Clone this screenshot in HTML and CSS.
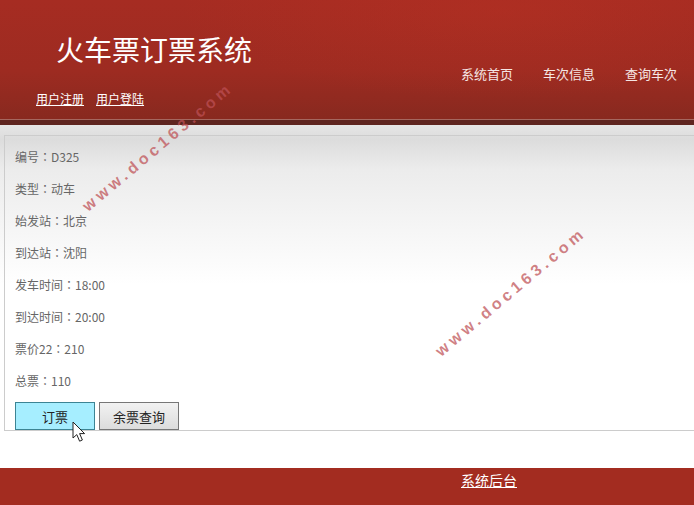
FILE: index.html
```html
<!DOCTYPE html>
<html lang="zh-CN">
<head>
<meta charset="UTF-8">
<meta name="viewport" content="width=device-width, initial-scale=1.0">
<title>火车票订票系统</title>
<link rel="stylesheet" href="styles.css">
</head>
<body>

<!-- 头部 -->
<header class="header">
<div class="brand">
<h1>火车票订票系统</h1>
<div class="user-links">
<a href="#">用户注册</a>
<a href="#">用户登陆</a>
</div>
</div>
<ul class="nav">
<li><a href="#">系统首页</a></li>
<li><a href="#">车次信息</a></li>
<li><a href="#">查询车次</a></li>
</ul>
</header>

<!-- 车次详情 -->
<div class="main">
<div class="detail">
<p>编号<span class="sep" lang="zh-TW">：</span>D325</p>
<p>类型<span class="sep" lang="zh-TW">：</span>动车</p>
<p>始发站<span class="sep" lang="zh-TW">：</span>北京</p>
<p>到达站<span class="sep" lang="zh-TW">：</span>沈阳</p>
<p>发车时间<span class="sep" lang="zh-TW">：</span>18:00</p>
<p>到达时间<span class="sep" lang="zh-TW">：</span>20:00</p>
<p>票价22<span class="sep" lang="zh-TW">：</span>210</p>
<p>总票<span class="sep" lang="zh-TW">：</span>110</p>
<div class="actions">
<button class="btn btn-hover">订票</button>
<button class="btn">余票查询</button>
</div>
</div>
</div>

<footer class="footer">
<a href="#">系统后台</a>
</footer>

<!-- 鼠标 -->
<svg class="cursor" width="14" height="22" viewBox="0 0 14 22">
<path d="M1 1V17L4.8 13.6L7.6 20.2L10.4 19L7.6 12.6H12.6Z" fill="#fff" stroke="#222" stroke-width="1"/>
</svg>

<!-- 水印 -->
<div class="watermark wm-1">www.doc163.com</div>
<div class="watermark wm-2">www.doc163.com</div>

</body>
</html>
```

FILE: styles.css
```css
html,body{
margin:0;
height:505px;
overflow:hidden;
}

body{
position:relative;
font-family:"Noto Sans CJK SC","Noto Sans",sans-serif;
background:#fff;
color:#666;
font-size:12px;
}

a{
color:#fff;
}

/* 头部 */
.header{
height:119px;
display:flex;
justify-content:space-between;
background:
radial-gradient(ellipse 320px 90px at 500px 10px, rgba(190,50,35,0.35) 0%, transparent 100%),
linear-gradient(180deg,#a62c22 0%,#9d2b21 60%,#88291f 100%);
border-bottom:1px solid #a5675f;
box-shadow:0 5px 0 #5f2520;
}

.brand{
padding-left:36px;
}

.brand h1{
margin:0;
padding:28px 0 0 20px;
height:62px;
font-size:28px;
line-height:42px;
font-weight:normal;
color:#fff;
}

.user-links{
display:flex;
gap:12px;
line-height:18px;
}

.nav{
display:flex;
gap:30px;
margin:0;
padding:64px 17px 0 0;
list-style:none;
font-size:13px;
line-height:20px;
}

.nav a{
text-decoration:none;
color:#f6e6e4;
}

/* 内容 */
.main{
margin-top:5px;
padding:10px 0 0 4px;
background:linear-gradient(180deg,#e6e6e6 0%,#dcdcdc 14px,#ececec 45px,#f5f5f5 100px,#fff 160px);
}

.detail{
height:289px;
margin-right:-2px;
padding:5px 10px 0;
border:1px solid #ccc;
}

.detail p{
margin:0;
height:32px;
line-height:32px;
}

/* 全角冒号居中 */
.sep{
font-family:"Noto Sans CJK TC",sans-serif;
}

.actions{
display:flex;
gap:4px;
margin-top:5px;
}

.btn{
width:80px;
height:28px;
padding:0;
font-family:inherit;
font-size:13px;
color:#222;
background:linear-gradient(180deg,#f2f2f2,#dcdcdc);
border:1px solid #777;
}

.btn-hover{
background:#a6eeff;
border-color:#3c8494;
}

.footer{
position:absolute;
left:0;
right:0;
bottom:0;
height:37px;
padding-left:461px;
box-sizing:border-box;
background:#a32c20;
font-size:14px;
line-height:25px;
}

.cursor{
position:absolute;
left:72px;
top:421px;
}

.watermark{
position:absolute;
width:200px;
text-align:center;
font-family:"Liberation Sans",sans-serif;
font-size:16px;
font-weight:bold;
letter-spacing:4.1px;
line-height:20px;
color:rgba(190,80,85,0.72);
transform:rotate(-40deg);
}

.wm-1{
left:58px;
top:137px;
}

.wm-2{
left:411px;
top:282px;
}
```
